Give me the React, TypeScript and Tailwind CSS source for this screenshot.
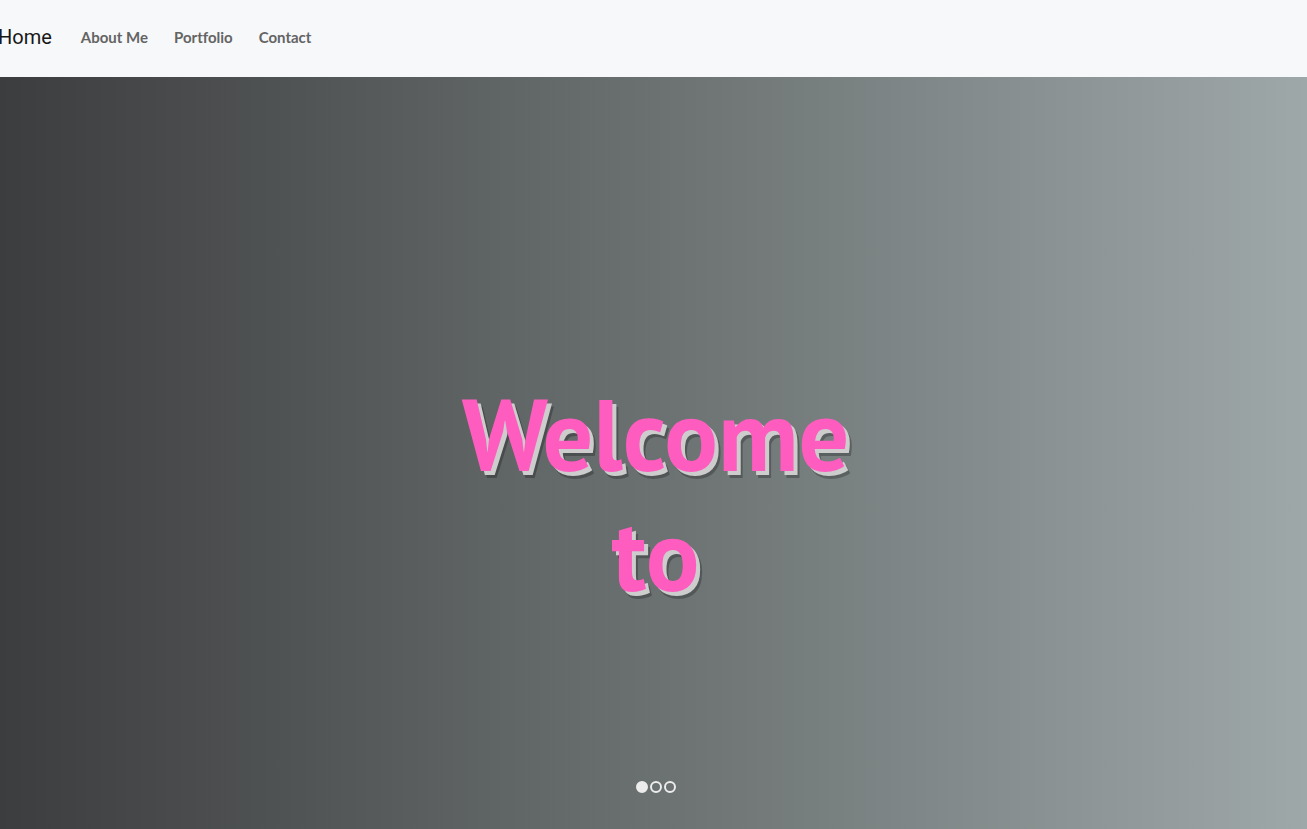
const links = ["About Me", "Portfolio", "Contact"];
const slides = ["First slide", "Second slide", "Third slide"];

export default function App() {
  return (
    <div className="flex min-h-screen flex-col">
      <header className="bg-[#f7f8fa]">
        <nav className="-ml-0.5 flex h-[77px] items-center pb-0.5">
          <a href="#home" className="mr-[29px] pb-0.5 font-['Roboto',sans-serif] text-xl text-[#171717]">
            Home
          </a>
          <ul className="flex gap-[26px] font-['Lato',sans-serif] text-[15px] font-bold text-[#646464] [font-variant-ligatures:none]">
            {links.map((label) => (
              <li key={label}>
                <a href="#section">{label}</a>
              </li>
            ))}
          </ul>
        </nav>
      </header>
      <main className="flex grow flex-col items-center bg-linear-to-r from-[#3c3d3e] via-[#6b7171] to-[#9fa8a9] pl-1">
        <h1 className="flex grow flex-col items-center justify-center pt-[130px] text-center font-['PT_Sans',sans-serif] text-[100px] leading-[120px] font-bold text-[#ff5cbf] [text-shadow:4px_4px_0_#cdcdcd,6px_7px_0_rgba(0,0,0,0.25)]">
          <span>Welcome</span>
          <span>to</span>
        </h1>
        <div className="flex gap-0.5 pb-9">
          {slides.map((label, index) => (
            <button
              key={label}
              type="button"
              aria-label={label}
              className={
                index === 0
                  ? "size-3 rounded-full border-2 border-[#ececec] bg-[#ececec]"
                  : "size-3 rounded-full border-2 border-[#ececec]"
              }
            />
          ))}
        </div>
      </main>
    </div>
  );
}
